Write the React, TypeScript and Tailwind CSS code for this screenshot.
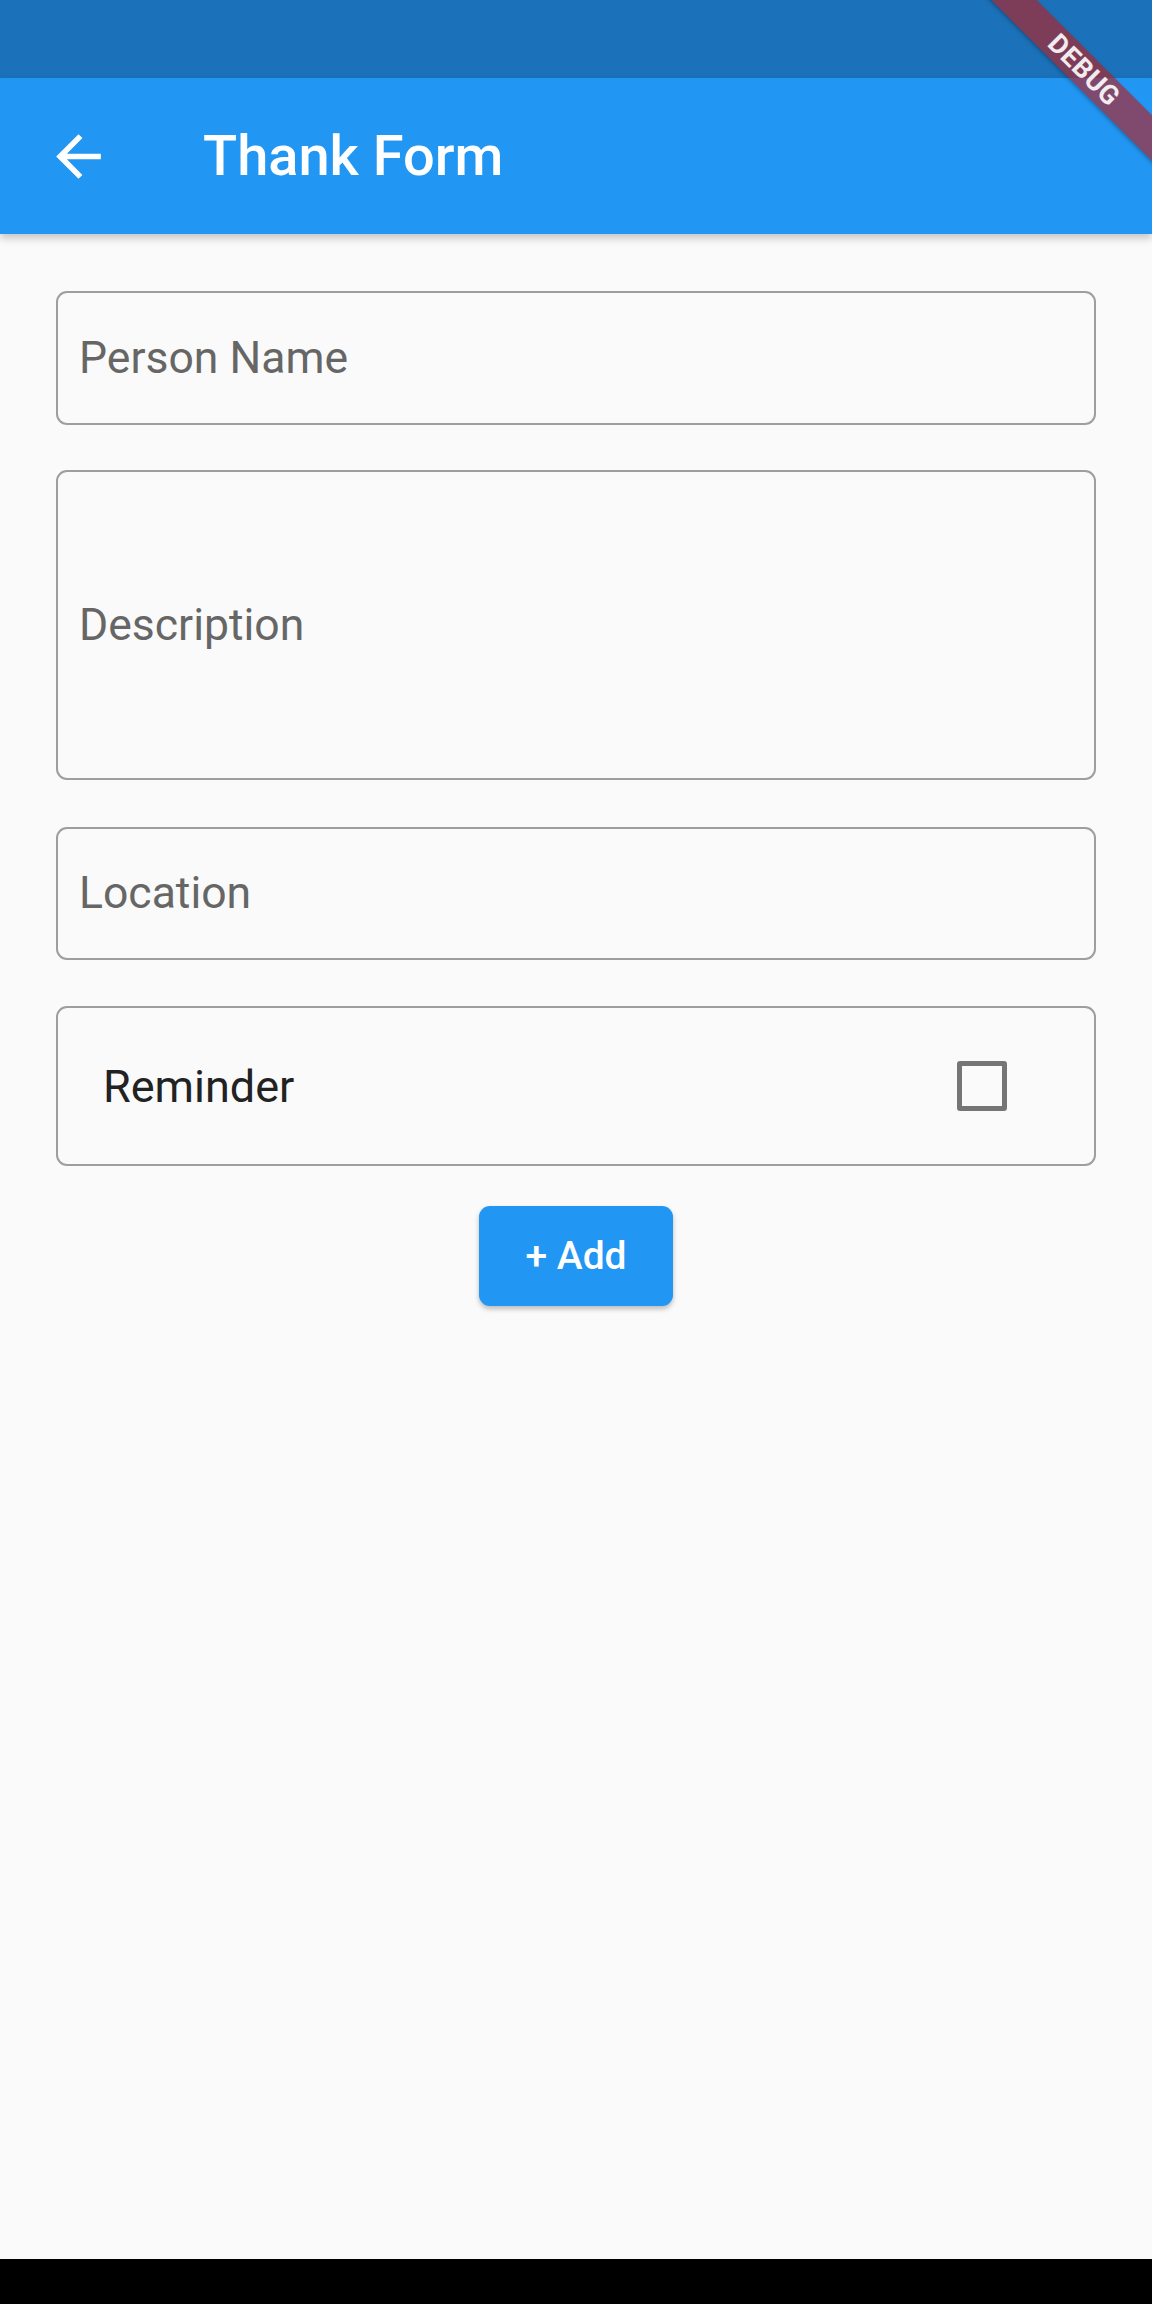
import { ReactNode } from "react";

function OutlinedField({ label, height }: { label: string; height: string }) {
  return (
    <div
      className={`${height} flex items-center rounded-[11px] border-2 border-[#9e9e9e] pl-[21px]`}
    >
      <span className="text-[44.5px] leading-none text-[#666666]">{label}</span>
    </div>
  );
}

function BackArrow() {
  return (
    <svg viewBox="0 0 24 24" className="h-[67px] w-[67px] fill-white">
      <path d="M20 11H7.83l5.59-5.59L12 4l-8 8 8 8 1.41-1.41L7.83 13H20v-2z" />
    </svg>
  );
}

function DebugBanner(): ReactNode {
  return (
    <div className="pointer-events-none absolute left-[934px] top-[54px] z-20 flex h-[32px] w-[300px] rotate-45 items-center justify-center bg-[#b71c1ca0] shadow-[0_2px_4px_rgba(0,0,0,0.25)]">
      <span className="text-[27px] font-bold leading-none tracking-[0.5px] text-white/90">
        DEBUG
      </span>
    </div>
  );
}

export default function App() {
  return (
    <div className="relative flex h-[2304px] w-[1152px] flex-col overflow-hidden bg-[#fafafa] font-['Roboto',sans-serif]">
      <div className="h-[78px] shrink-0 bg-[#1b72ba]" />
      <div className="z-10 flex h-[156px] shrink-0 items-center bg-[#2196f3] shadow-[0_4px_8px_rgba(0,0,0,0.22)]">
        <div className="ml-[45px] flex">
          <BackArrow />
        </div>
        <h1 className="ml-[91px] text-[56px] font-medium leading-none text-white">Thank Form</h1>
      </div>

      <div className="flex flex-1 flex-col px-[56px] pt-[57px]">
        <OutlinedField label="Person Name" height="h-[134px]" />
        <div className="h-[45px]" />
        <OutlinedField label="Description" height="h-[310px]" />
        <div className="h-[47px]" />
        <OutlinedField label="Location" height="h-[133px]" />
        <div className="h-[46px]" />
        <div className="flex h-[160px] items-center justify-between rounded-[11px] border-2 border-[#9e9e9e] pl-[45px] pr-[87px]">
          <span className="text-[45px] leading-none text-[#222222]">Reminder</span>
          <div className="h-[50px] w-[50px] rounded-[3px] border-[5px] border-[#757575]" />
        </div>
        <div className="mt-[40px] flex justify-center">
          <button className="flex h-[100px] w-[194px] items-center justify-center rounded-[11px] bg-[#2196f3] text-[39px] font-medium leading-none text-white shadow-[0_3px_5px_rgba(0,0,0,0.25)]">
            + Add
          </button>
        </div>
      </div>

      <div className="h-[45px] shrink-0 bg-black" />
      <DebugBanner />
    </div>
  );
}
